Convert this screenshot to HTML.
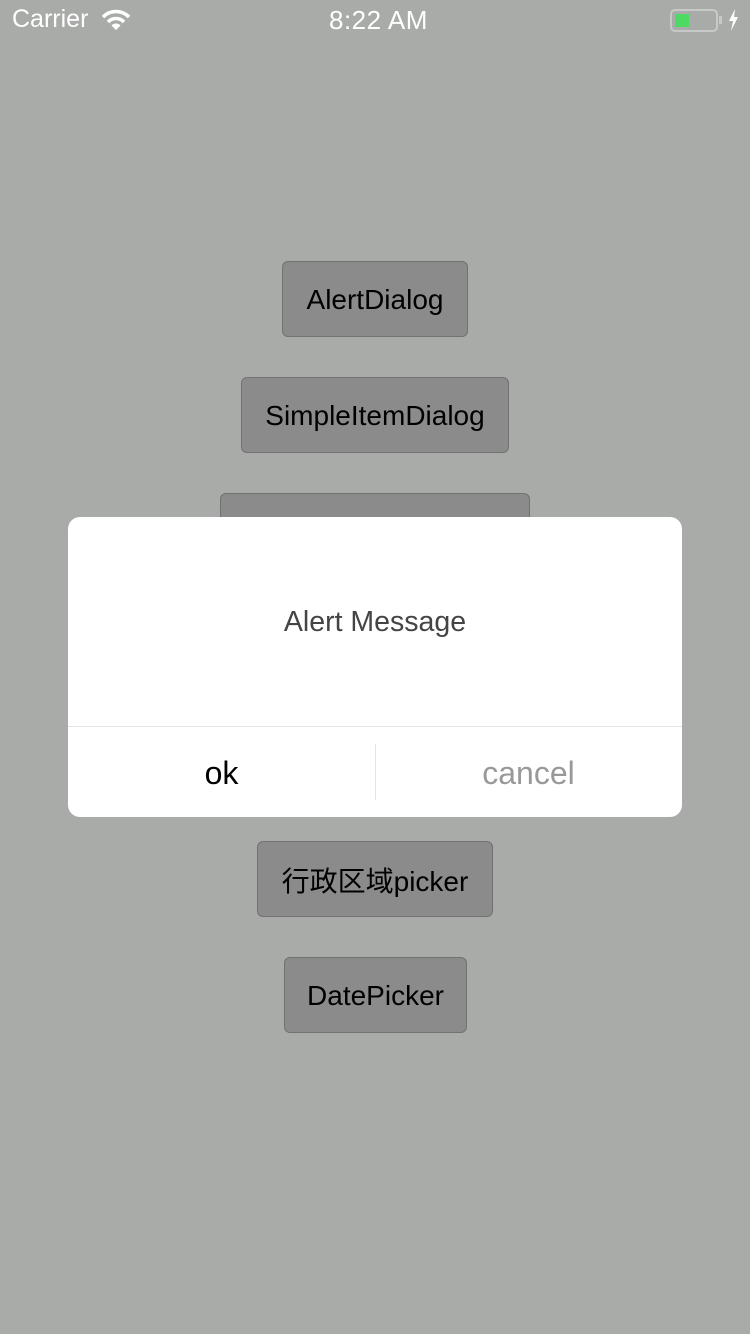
<!DOCTYPE html>
<html><head><meta charset="utf-8"><style>
*{margin:0;padding:0;box-sizing:border-box}
body{width:750px;height:1334px;background:#a9aba9;position:relative;overflow:hidden;font-family:"Liberation Sans","Noto Sans CJK SC",sans-serif}
.b{position:absolute;height:76px;background:#8b8b8b;border:1.5px solid #727272;border-radius:6px;font-size:28px;color:#000;display:flex;align-items:center;justify-content:center;padding-top:2px}
.sb{position:absolute;top:5px;color:#fff;font-size:25px}
</style></head><body>
<div class="sb" style="left:12px">Carrier</div>
<svg style="position:absolute;left:101px;top:9px" width="30" height="22" viewBox="0 0 30 22"><path d="M2 8 A18 18 0 0 1 28 8" stroke="#fff" stroke-width="3.5" fill="none"/><path d="M7 13 A11 11 0 0 1 23 13" stroke="#fff" stroke-width="3.5" fill="none"/><path d="M15 21 L10.5 16.5 A6 6 0 0 1 19.5 16.5 Z" fill="#fff"/></svg>
<div class="sb" style="left:329px;font-size:26px;letter-spacing:0.5px">8:22 AM</div>
<div style="position:absolute;left:670px;top:9px;width:48px;height:23px;border:2px solid #c8c8c8;border-radius:5px"><div style="position:absolute;left:3px;top:3px;width:14px;height:13px;background:#4cd964"></div></div>
<div style="position:absolute;left:719px;top:16px;width:3px;height:8px;background:#c8c8c8"></div>
<svg style="position:absolute;left:727px;top:9px" width="12" height="22" viewBox="0 0 12 22"><path d="M8 0 L2 12 H6 L4 22 L11 8 H7 Z" fill="#fff"/></svg>
<div class="b" style="left:282px;top:261px;width:186px">AlertDialog</div>
<div class="b" style="left:241px;top:377px;width:268px">SimpleItemDialog</div>
<div class="b" style="left:220px;top:493px;width:310px"></div>
<div class="b" style="left:257px;top:841px;width:236px">行政区域picker</div>
<div class="b" style="left:284px;top:957px;width:183px">DatePicker</div>
<div style="position:absolute;left:68px;top:517px;width:614px;height:300px;background:#fff;border-radius:12px">
<div style="position:absolute;top:89px;width:100%;text-align:center;font-size:28.5px;color:#444">Alert Message</div>
<div style="position:absolute;top:209px;left:0;width:100%;height:1px;background:#e4e4e4"></div>
<div style="position:absolute;top:227px;left:307px;width:1px;height:56px;background:#e4e4e4"></div>
<div style="position:absolute;top:238px;left:0;width:307px;text-align:center;font-size:32px;color:#000">ok</div>
<div style="position:absolute;top:238px;left:307px;width:307px;text-align:center;font-size:32px;color:#999">cancel</div>
</div>
</body></html>
